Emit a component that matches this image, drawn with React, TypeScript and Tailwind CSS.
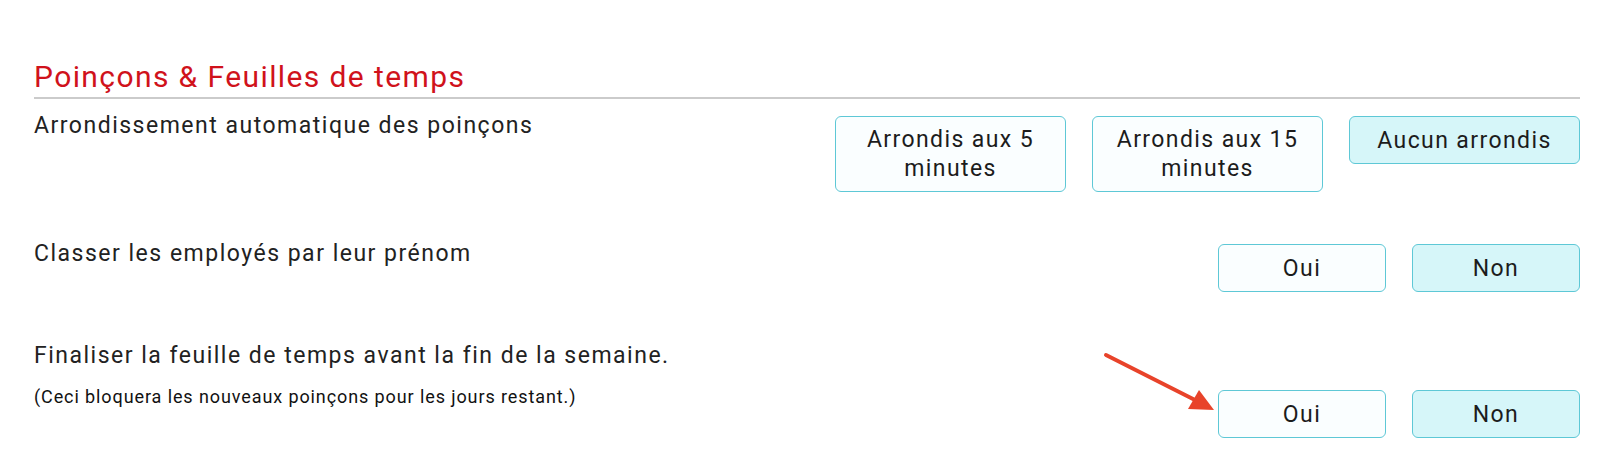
import React from 'react';

type Option = {
  label: string;
  selected?: boolean;
};

type SettingRowProps = {
  title: string;
  note?: string;
  options: Option[];
  buttonWidth: string;
  buttonsOffset?: string;
  showArrow?: boolean;
};

const OptionButton: React.FC<{ option: Option; width: string }> = ({ option, width }) => (
  <button
    className={`${width} shrink-0 min-h-[48px] rounded-[6px] border-[1.5px] border-[#5ec8d6] px-3 py-[8px] text-[23px] leading-[29px] tracking-[1.4px] text-[#1c1c1c] ${
      option.selected ? 'bg-[#d6f6f9]' : 'bg-[#fafeff]'
    }`}
  >
    {option.label}
  </button>
);

// annotation arrow pointing at the "Oui" button
const Arrow: React.FC = () => (
  <svg className="absolute -left-[116px] -top-[40px]" width="116" height="64" viewBox="0 0 116 64">
    <line x1="4" y1="5" x2="93" y2="50" stroke="#e8432a" strokeWidth="4" strokeLinecap="round" />
    <polygon points="112,60 86,59 97,40" fill="#e8432a" />
  </svg>
);

const SettingRow: React.FC<SettingRowProps> = ({ title, note, options, buttonWidth, buttonsOffset, showArrow }) => (
  <div className="flex justify-between items-start">
    <div>
      <p className="text-[23px] leading-[20px] tracking-[1.5px] text-[#222]">{title}</p>
      {note && <p className="mt-[20px] text-[18px] leading-[22px] tracking-[0.9px] text-[#111]">{note}</p>}
    </div>
    <div className={`relative flex shrink-0 items-start gap-[26px] ${buttonsOffset ?? ''}`}>
      {showArrow && <Arrow />}
      {options.map((opt) => (
        <OptionButton key={opt.label} option={opt} width={buttonWidth} />
      ))}
    </div>
  </div>
);

export default function App() {
  return (
    <div
      className="bg-white h-[475px] overflow-hidden pl-[34px] pr-[20px] pt-[58px]"
      style={{ fontFamily: 'Roboto, sans-serif' }}
    >
      <h2 className="text-[30px] leading-[38px] tracking-[1.4px] text-[#d0121b] pb-[1px] border-b-2 border-[#cbcbcb]">
        Poinçons &amp; Feuilles de temps
      </h2>
      <div className="pt-[17px] flex flex-col">
        <SettingRow
          title="Arrondissement automatique des poinçons"
          buttonWidth="w-[231px]"
          options={[
            { label: 'Arrondis aux 5 minutes' },
            { label: 'Arrondis aux 15 minutes' },
            { label: 'Aucun arrondis', selected: true },
          ]}
        />
        <div className="mt-[52px]">
          <SettingRow
            title="Classer les employés par leur prénom"
            buttonWidth="w-[168px]"
            options={[{ label: 'Oui' }, { label: 'Non', selected: true }]}
          />
        </div>
        <div className="mt-[54px]">
          <SettingRow
            title="Finaliser la feuille de temps avant la fin de la semaine."
            note="(Ceci bloquera les nouveaux poinçons pour les jours restant.)"
            buttonWidth="w-[168px]"
            buttonsOffset="mt-[44px]"
            showArrow
            options={[{ label: 'Oui' }, { label: 'Non', selected: true }]}
          />
        </div>
      </div>
    </div>
  );
}
